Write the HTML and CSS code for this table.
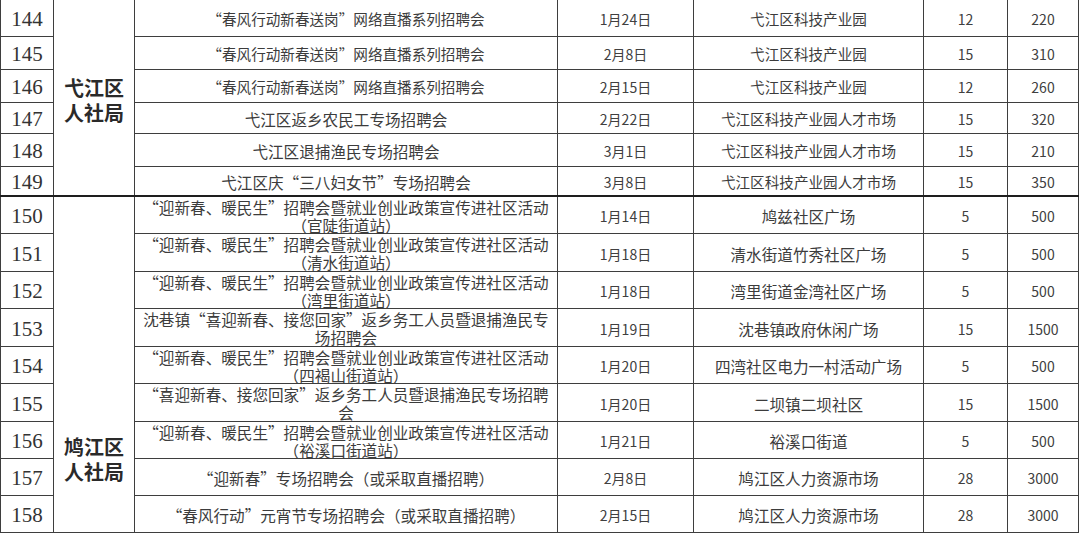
FILE: index.html
```html
<!DOCTYPE html>
<html lang="zh-CN">
<head>
<meta charset="utf-8">
<title>招聘会安排表</title>
<link rel="stylesheet" href="styles.css">
</head>
<body>
<div class="sheet">
  <div class="sec upper">
    <div class="district up">弋江区<br>人社局</div>

    <div class="c no">144</div>
    <div class="c ev sm">“春风行动新春送岗”网络直播系列招聘会</div>
    <div class="c date">1月24日</div>
    <div class="c loc sm">弋江区科技产业园</div>
    <div class="c n">12</div>
    <div class="c n">220</div>

    <div class="c no">145</div>
    <div class="c ev sm">“春风行动新春送岗”网络直播系列招聘会</div>
    <div class="c date">2月8日</div>
    <div class="c loc sm">弋江区科技产业园</div>
    <div class="c n">15</div>
    <div class="c n">310</div>

    <div class="c no">146</div>
    <div class="c ev sm">“春风行动新春送岗”网络直播系列招聘会</div>
    <div class="c date">2月15日</div>
    <div class="c loc sm">弋江区科技产业园</div>
    <div class="c n">12</div>
    <div class="c n">260</div>

    <div class="c no">147</div>
    <div class="c ev">弋江区返乡农民工专场招聘会</div>
    <div class="c date">2月22日</div>
    <div class="c loc sm">弋江区科技产业园人才市场</div>
    <div class="c n">15</div>
    <div class="c n">320</div>

    <div class="c no">148</div>
    <div class="c ev">弋江区退捕渔民专场招聘会</div>
    <div class="c date">3月1日</div>
    <div class="c loc sm">弋江区科技产业园人才市场</div>
    <div class="c n">15</div>
    <div class="c n">210</div>

    <div class="c no">149</div>
    <div class="c ev">弋江区庆“三八妇女节”专场招聘会</div>
    <div class="c date">3月8日</div>
    <div class="c loc sm">弋江区科技产业园人才市场</div>
    <div class="c n">15</div>
    <div class="c n">350</div>
  </div>

  <div class="sec lower">
    <div class="district low">鸠江区<br>人社局</div>

    <div class="c no">150</div>
    <div class="c ev two">“迎新春、暖民生”招聘会暨就业创业政策宣传进社区活动<br>（官陡街道站）</div>
    <div class="c date">1月14日</div>
    <div class="c loc">鸠兹社区广场</div>
    <div class="c n">5</div>
    <div class="c n">500</div>

    <div class="c no">151</div>
    <div class="c ev two">“迎新春、暖民生”招聘会暨就业创业政策宣传进社区活动<br>（清水街道站）</div>
    <div class="c date">1月18日</div>
    <div class="c loc">清水街道竹秀社区广场</div>
    <div class="c n">5</div>
    <div class="c n">500</div>

    <div class="c no">152</div>
    <div class="c ev two">“迎新春、暖民生”招聘会暨就业创业政策宣传进社区活动<br>（湾里街道站）</div>
    <div class="c date">1月18日</div>
    <div class="c loc">湾里街道金湾社区广场</div>
    <div class="c n">5</div>
    <div class="c n">500</div>

    <div class="c no">153</div>
    <div class="c ev two">沈巷镇“喜迎新春、接您回家”返乡务工人员暨退捕渔民专<br>场招聘会</div>
    <div class="c date">1月19日</div>
    <div class="c loc">沈巷镇政府休闲广场</div>
    <div class="c n">15</div>
    <div class="c n">1500</div>

    <div class="c no">154</div>
    <div class="c ev two">“迎新春、暖民生”招聘会暨就业创业政策宣传进社区活动<br>（四褐山街道站）</div>
    <div class="c date">1月20日</div>
    <div class="c loc">四湾社区电力一村活动广场</div>
    <div class="c n">5</div>
    <div class="c n">500</div>

    <div class="c no">155</div>
    <div class="c ev two">“喜迎新春、接您回家”返乡务工人员暨退捕渔民专场招聘<br>会</div>
    <div class="c date">1月20日</div>
    <div class="c loc">二坝镇二坝社区</div>
    <div class="c n">15</div>
    <div class="c n">1500</div>

    <div class="c no">156</div>
    <div class="c ev two">“迎新春、暖民生”招聘会暨就业创业政策宣传进社区活动<br>（裕溪口街道站）</div>
    <div class="c date">1月21日</div>
    <div class="c loc">裕溪口街道</div>
    <div class="c n">5</div>
    <div class="c n">500</div>

    <div class="c no">157</div>
    <div class="c ev">“迎新春”专场招聘会（或采取直播招聘）</div>
    <div class="c date">2月8日</div>
    <div class="c loc">鸠江区人力资源市场</div>
    <div class="c n">28</div>
    <div class="c n">3000</div>

    <div class="c no">158</div>
    <div class="c ev">“春风行动”元宵节专场招聘会（或采取直播招聘）</div>
    <div class="c date">2月15日</div>
    <div class="c loc">鸠江区人力资源市场</div>
    <div class="c n">28</div>
    <div class="c n">3000</div>
  </div>
</div>
</body>
</html>
```

FILE: styles.css
```css
html, body {
  margin: 0;
  padding: 0;
  background: #ffffff;
}

body {
  width: 1080px;
  height: 533px;
  overflow: hidden;
  font-family: "Noto Sans CJK SC", "Noto Sans", sans-serif;
  color: #3c3c3c;
}

.sheet {
  width: 1079px;
}

.sec {
  display: grid;
  grid-template-columns: 52px 80px 422px 135px 229px 83px 70px;
  gap: 1px;
  background: #3e3e3e;
  padding: 0 1px;
}

.upper {
  grid-template-rows: 36px 32px 32px 30px 32px 28px;
}

.lower {
  grid-template-rows: 36px 37px 36px 37px 36px 37px 36px 36px 36px;
  border-top: 2px solid #1e1e1e;
  padding-bottom: 1px;
}

.c {
  background: #ffffff;
  display: flex;
  align-items: center;
  justify-content: center;
  text-align: center;
  white-space: nowrap;
  padding-top: 2px;
  box-sizing: border-box;
  font-size: 15.6px;
  line-height: 18px;
}

.c.sm {
  font-size: 14.6px;
}

.c.two {
  line-height: 18px;
  padding-top: 1px;
}

.no {
  font-family: "Liberation Serif", "DejaVu Serif", serif;
  font-size: 21px;
  color: #333333;
}

.date,
.n {
  font-size: 14px;
  color: #404040;
}

.district {
  grid-column: 2;
  grid-row: 1 / span 9;
  background: #ffffff;
  display: flex;
  justify-content: center;
  text-align: center;
  font-size: 20px;
  font-weight: 700;
  line-height: 25px;
  color: #2a2a2a;
  box-sizing: border-box;
}

.district.up {
  grid-row: 1 / span 6;
  align-items: center;
  padding-top: 4px;
}

.district.low {
  align-items: flex-start;
  padding-top: 237px;
}
```
